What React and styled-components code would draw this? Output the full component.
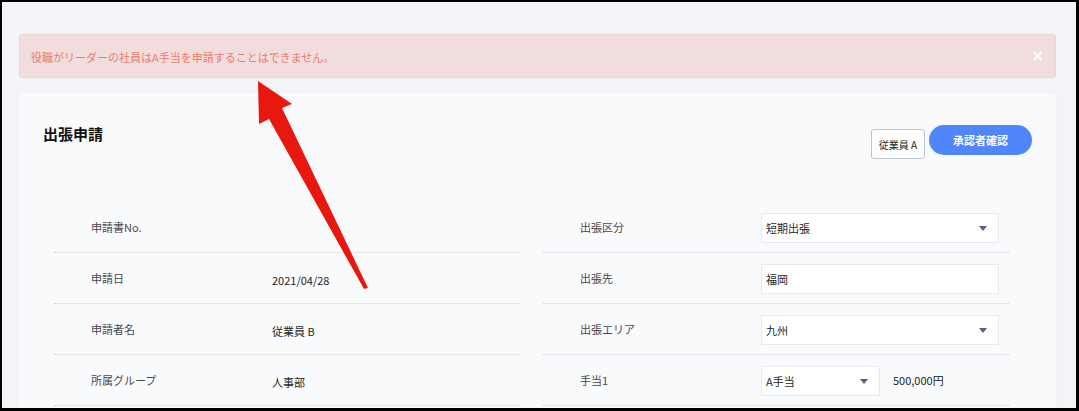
import styled, { createGlobalStyle } from 'styled-components';

const GlobalStyle = createGlobalStyle`
	html, body {
		margin: 0;
		padding: 0;
		background: #000;
	}
	body {
		font-family: 'Noto Sans CJK JP', 'Noto Sans', sans-serif;
	}
`;

const leftRows = [
	{ label: '申請書No.', value: '' },
	{ label: '申請日', value: '2021/04/28' },
	{ label: '申請者名', value: '従業員 B' },
	{ label: '所属グループ', value: '人事部' },
];

export default function App() {
	return (
		<>
			<GlobalStyle />
			<Frame>
				<Page>
					<Alert>
						<AlertText>役職がリーダーの社員はA手当を申請することはできません。</AlertText>
						<Close>×</Close>
					</Alert>
					<Card>
						<Header>
							<Title>出張申請</Title>
							<Actions>
								<UserButton>従業員 A</UserButton>
								<PrimaryButton>承認者確認</PrimaryButton>
							</Actions>
						</Header>
						<Form>
							<Column>
								{leftRows.map((row) => (
									<Row key={row.label}>
										<Label>{row.label}</Label>
										<Value>{row.value}</Value>
									</Row>
								))}
							</Column>
							<Column>
								<Row>
									<Label>出張区分</Label>
									<Select>
										<span>短期出張</span>
										<Caret />
									</Select>
								</Row>
								<Row>
									<Label>出張先</Label>
									<Input>福岡</Input>
								</Row>
								<Row>
									<Label>出張エリア</Label>
									<Select>
										<span>九州</span>
										<Caret />
									</Select>
								</Row>
								<Row>
									<Label>手当1</Label>
									<Inline>
										<Select $width={119}>
											<span>A手当</span>
											<Caret />
										</Select>
										<Amount>500,000円</Amount>
									</Inline>
								</Row>
							</Column>
						</Form>
					</Card>
				</Page>
				<Arrow viewBox="0 0 1079 411">
					<polygon
						points="258,81 292,104 282,108 368,288 364,289 269,119 259,124"
						fill="#e8180e"
					/>
				</Arrow>
			</Frame>
		</>
	);
}

const Frame = styled.div`
	position: relative;
	width: 1079px;
	height: 411px;
	box-sizing: border-box;
	border-style: solid;
	border-color: #000;
	border-width: 2px 3px 3px 2px;
	background: #f3f4f8;
	overflow: hidden;
`;

const Page = styled.div`
	padding: 32px 20px 0 17px;
`;

const Alert = styled.div`
	display: flex;
	align-items: center;
	justify-content: space-between;
	height: 44px;
	box-sizing: border-box;
	padding: 0 11px 0 11px;
	background: #f2dddd;
	border: 1px solid #eed4d4;
	border-radius: 3px;
	margin-bottom: 15px;
`;

const AlertText = styled.span`
	color: #ec7a6d;
	font-size: 11px;
	margin-top: 2px;
`;

const Close = styled.span`
	color: #fff;
	font-size: 15px;
	font-weight: 700;
	font-family: 'DejaVu Sans', sans-serif;
	line-height: 1;
`;

const Card = styled.div`
	background: #f9fafc;
	border-radius: 4px;
	box-shadow: 0 1px 3px rgba(40, 50, 90, 0.04);
	padding: 32px 24px 0 24px;
	height: 330px;
	box-sizing: border-box;
`;

const Header = styled.div`
	display: flex;
	justify-content: space-between;
	align-items: flex-start;
	height: 77px;
`;

const Title = styled.h2`
	margin: 0;
	font-size: 15px;
	line-height: 18px;
	font-weight: 700;
	color: #111;
`;

const Actions = styled.div`
	display: flex;
	align-items: flex-start;
	gap: 4px;
`;

const UserButton = styled.div`
	margin-top: 4px;
	height: 30px;
	width: 54px;
	box-sizing: border-box;
	display: flex;
	align-items: center;
	justify-content: center;
	background: #fff;
	border: 1px solid #b9c4d6;
	border-radius: 3px;
	font-size: 10px;
	color: #222;
`;

const PrimaryButton = styled.div`
	height: 30px;
	width: 103px;
	display: flex;
	align-items: center;
	justify-content: center;
	background: #4f87fb;
	border-radius: 15px;
	color: #fff;
	font-size: 11px;
	font-weight: 700;
`;

const Form = styled.div`
	display: grid;
	grid-template-columns: 466px 466px;
	column-gap: 23px;
	margin-left: 11px;
`;

const Column = styled.div`
	display: flex;
	flex-direction: column;
`;

const Row = styled.div`
	display: grid;
	grid-template-columns: 181px 1fr;
	align-items: center;
	height: 51px;
	box-sizing: border-box;
	padding-left: 37px;
	border-bottom: 1px dotted #d2d4d8;
`;

const Label = styled.span`
	font-size: 11px;
	color: #484848;
`;

const Value = styled.span`
	font-size: 11px;
	color: #1e1e1e;
	margin-top: 3px;
`;

const Field = styled.div`
	height: 30px;
	box-sizing: border-box;
	background: #fff;
	border: 1px solid #e7e9ee;
	display: flex;
	align-items: center;
	padding: 0 10px 0 4px;
	font-size: 11px;
	color: #1e1e1e;
	margin-top: 2px;
`;

const Input = styled(Field)`
	width: 238px;
`;

const Select = styled(Field)`
	width: ${(props) => props.$width || 238}px;
	justify-content: space-between;
`;

const Caret = styled.span`
	width: 0;
	height: 0;
	border-left: 4px solid transparent;
	border-right: 4px solid transparent;
	border-top: 5px solid #5a6084;
	margin-right: 1px;
`;

const Inline = styled.div`
	display: flex;
	align-items: center;
	gap: 13px;
`;

const Amount = styled.span`
	font-size: 11px;
	color: #1e1e1e;
`;

const Arrow = styled.svg`
	position: absolute;
	left: -2px;
	top: -2px;
	width: 1079px;
	height: 411px;
	pointer-events: none;
`;
